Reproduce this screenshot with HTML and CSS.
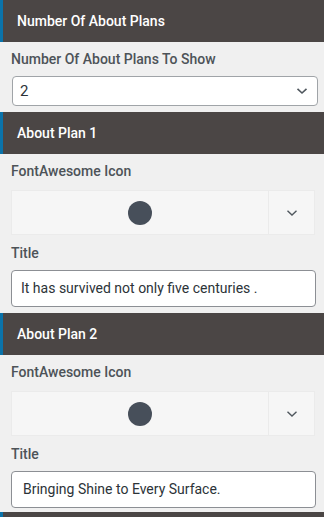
FILE: index.html
```html
<!DOCTYPE html>
<html>
<head>
<meta charset="utf-8">
<link rel="stylesheet" href="styles.css">
</head>
<body>
<div class="panel">
  <div class="section">
    <div class="header">Number Of About Plans</div>
    <div class="body">
      <div class="label">Number Of About Plans To Show</div>
      <div class="select">
        <span>2</span>
        <svg class="chev" width="12" height="8" viewBox="0 0 12 8"><path d="M1.5 1.8 L6 6 L10.5 1.8" fill="none" stroke="#50575e" stroke-width="1.6"/></svg>
      </div>
    </div>
  </div>
  <div class="section">
    <div class="header">About Plan 1</div>
    <div class="body">
      <div class="label">FontAwesome Icon</div>
      <div class="picker">
        <div class="pick-main"><span class="dot"></span></div>
        <div class="pick-btn"><svg width="12" height="8" viewBox="0 0 12 8"><path d="M1.5 1.8 L6 6 L10.5 1.8" fill="none" stroke="#50575e" stroke-width="1.4"/></svg></div>
      </div>
      <div class="label label-gap">Title</div>
      <div class="input">It has survived not only five centuries .</div>
    </div>
  </div>
  <div class="section">
    <div class="header">About Plan 2</div>
    <div class="body last">
      <div class="label">FontAwesome Icon</div>
      <div class="picker">
        <div class="pick-main"><span class="dot"></span></div>
        <div class="pick-btn"><svg width="12" height="8" viewBox="0 0 12 8"><path d="M1.5 1.8 L6 6 L10.5 1.8" fill="none" stroke="#50575e" stroke-width="1.4"/></svg></div>
      </div>
      <div class="label label-gap">Title</div>
      <div class="input input-2">Bringing Shine to Every Surface.</div>
    </div>
  </div>
  <div class="section">
    <div class="header"></div>
  </div>
</div>
</body>
</html>
```
FILE: styles.css
```css
html, body {
  margin: 0;
  padding: 0;
  background: #f0f0f0;
  font-family: Roboto, "Liberation Sans", Arial, sans-serif;
}
.panel {
  width: 324px;
  height: 517px;
  overflow: hidden;
}
.header {
  height: 42px;
  box-sizing: border-box;
  background: #4b4645;
  border-left: 3px solid #0a73aa;
  color: #ffffff;
  font-size: 14px;
  font-weight: 500;
  line-height: 42px;
  padding-left: 14px;
}
.body {
  padding: 7px 8px 6px 11px;
  display: flex;
  flex-direction: column;
}
.body.last {
  padding-bottom: 4px;
}
.label {
  font-size: 14px;
  font-weight: 500;
  color: #4d5358;
  line-height: 20px;
  margin-bottom: 7px;
}
.label-gap {
  margin-top: 8px;
}
.select {
  height: 30px;
  box-sizing: border-box;
  margin-left: 1px;
  margin-right: -2px;
  background: #ffffff;
  border: 1px solid #a0a4a8;
  border-radius: 4px;
  display: flex;
  align-items: center;
  justify-content: space-between;
  padding: 0 9px 0 7px;
  font-size: 15px;
  color: #2c3338;
}
.chev {
  display: block;
}
.picker {
  height: 45px;
  box-sizing: border-box;
  margin-right: 1px;
  margin-top: 2px;
  display: flex;
  background: #f6f6f6;
  border: 1px solid #ebebeb;
}
.pick-main {
  flex: 1;
  display: flex;
  align-items: center;
  justify-content: center;
}
.dot {
  width: 24px;
  height: 24px;
  border-radius: 50%;
  background: #474f5a;
}
.pick-btn {
  width: 45px;
  border-left: 1px solid #ebebeb;
  display: flex;
  align-items: center;
  justify-content: center;
}
.pick-btn svg {
  display: block;
}
.input {
  height: 37px;
  box-sizing: border-box;
  background: #ffffff;
  border: 1px solid #8c8f94;
  border-radius: 4px;
  padding-left: 9px;
  font-size: 14px;
  color: #2c3338;
  line-height: 35px;
}
.input-2 {
  padding-left: 11px;
}
```
